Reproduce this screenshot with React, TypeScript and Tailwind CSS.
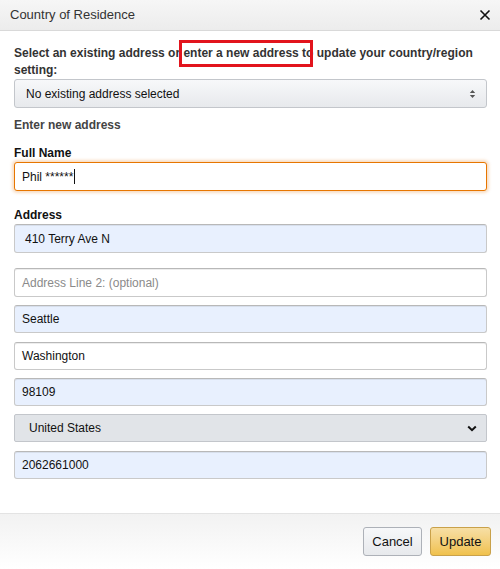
import React from 'react'

const font = { fontFamily: '"Liberation Sans", Arial, sans-serif' }

const Field = ({ value, placeholder, filled, indent }: { value?: string; placeholder?: string; filled?: boolean; indent?: boolean }) => (
  <div
    className={`flex items-center h-full rounded-[3px] border border-[#c9c9c9] border-t-[#b8b8b8] text-[12px] shadow-[inset_0_1px_0_rgba(0,0,0,0.07)] ${
      indent ? 'pl-[10px]' : 'pl-[7px]'
    } ${filled ? 'bg-[#e8f0fe] text-[#111]' : 'bg-white text-[#111]'}`}
  >
    {value ? <span>{value}</span> : <span className="text-[#8a8a8a]">{placeholder}</span>}
  </div>
)

export default function App() {
  return (
    <div className="w-[500px] h-[569px] bg-white flex flex-col text-[#111]" style={font}>
      {/* Header */}
      <div className="h-[31px] flex items-center justify-between pl-[10px] pr-[8px] bg-gradient-to-b from-[#f6f6f6] to-[#ececec] border-b border-[#d9d9d9]">
        <span className="text-[13px] text-[#333]">Country of Residence</span>
        <svg width="12" height="12" viewBox="0 0 12 12" className="mr-[1px]">
          <path d="M1.5 1.5 L10.5 10.5 M10.5 1.5 L1.5 10.5" stroke="#111" strokeWidth="1.6" />
        </svg>
      </div>

      {/* Body */}
      <div className="relative flex-1 pl-[14px] pr-[13px] pt-[14px]">
        <p className="text-[12px] leading-[17px] font-bold text-[#333]">
          Select an existing address or enter a new address to update your country/region setting:
        </p>
        <div className="absolute left-[179px] top-[9px] w-[134px] h-[27px] border-[3px] border-[#e2141d]" />

        <div className="h-[29px] flex items-center justify-between pl-[11px] pr-[10px] rounded-[3px] border border-[#c3c6cb] bg-gradient-to-b from-[#f7f8fa] to-[#e7e9ec] text-[12px] text-[#111]">
          <span>No existing address selected</span>
          <svg width="7" height="10" viewBox="0 0 7 10">
            <path d="M0.8 4 L3.5 1 L6.2 4 Z M0.8 6 L3.5 9 L6.2 6 Z" fill="#555" />
          </svg>
        </div>

        <div className="mt-[9px] text-[12px] leading-[17px] font-bold text-[#444]">Enter new address</div>
        <div className="mt-[11px] text-[12px] leading-[17px] font-bold text-[#111]">Full Name</div>
        <div className="h-[29px] flex items-center px-[7px] rounded-[3px] border border-[#e77600] shadow-[0_0_3px_2px_rgba(228,121,17,0.25)] bg-white text-[12px] text-[#111]">
          <span>Phil ******</span>
          <span className="inline-block w-[1px] h-[15px] bg-[#111] ml-[1px]" />
        </div>

        <div className="mt-[16px] text-[12px] leading-[17px] font-bold text-[#111]">Address</div>
        <div className="h-[29px]">
          <Field value="410 Terry Ave N" filled indent />
        </div>
        <div className="h-[29px] mt-[15px]">
          <Field placeholder="Address Line 2: (optional)" />
        </div>
        <div className="h-[28px] mt-[8px]">
          <Field value="Seattle" filled />
        </div>
        <div className="h-[28px] mt-[9px]">
          <Field value="Washington" />
        </div>
        <div className="h-[28px] mt-[8px]">
          <Field value="98109" filled />
        </div>
        <div className="h-[28px] mt-[8px] flex items-center justify-between pl-[14px] pr-[9px] rounded-[2px] border border-[#c3c6cb] bg-[#e1e4e8] text-[12px] text-[#111]">
          <span>United States</span>
          <svg width="10" height="7" viewBox="0 0 10 7">
            <path d="M1.2 1.5 L5 5.2 L8.8 1.5" stroke="#111" strokeWidth="2" fill="none" />
          </svg>
        </div>
        <div className="h-[28px] mt-[9px]">
          <Field value="2062661000" filled />
        </div>
      </div>

      {/* Footer */}
      <div className="h-[56px] border-t border-[#e3e3e3] bg-gradient-to-b from-[#f2f2f2] to-white flex items-start justify-end gap-[8px] pr-[9px] pt-[13px]">
        <button className="h-[29px] w-[59px] rounded-[3px] border border-[#adb1b8] bg-gradient-to-b from-[#f7f8fa] to-[#e7e9ec] text-[13px] text-[#111]">
          Cancel
        </button>
        <button className="h-[29px] w-[61px] rounded-[3px] border border-[#c9a14a] bg-gradient-to-b from-[#f7dfa5] to-[#f0c14b] text-[13px] text-[#111]">
          Update
        </button>
      </div>
    </div>
  )
}
